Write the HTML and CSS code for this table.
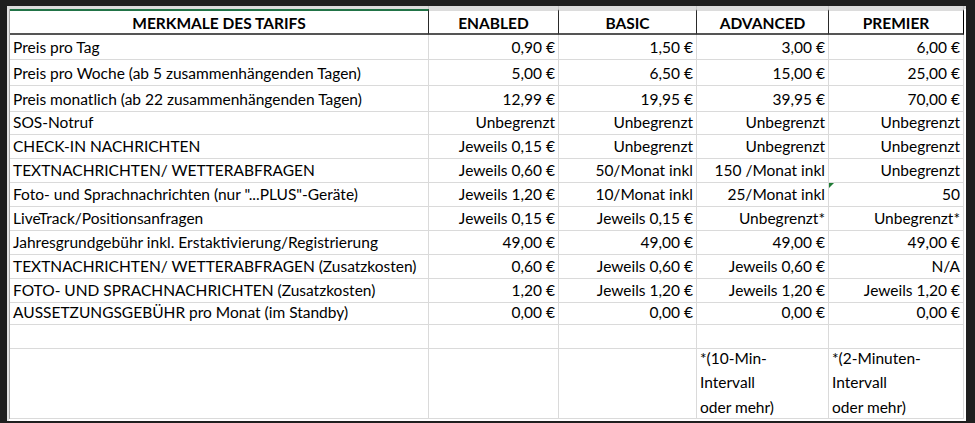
FILE: index.html
```html
<!DOCTYPE html>
<html lang="de">
<head>
<meta charset="utf-8">
<title>Merkmale des Tarifs</title>
<link rel="stylesheet" href="styles.css">
</head>
<body>
<div class="sheet">
  <div class="colbar">
    <span class="cb cb1"></span><span class="cb cb2"></span><span class="cb cb3"></span><span class="cb cb4"></span><span class="cb cb5"></span>
  </div>
  <div class="grid">
    <div class="rowbar"></div>
    <table class="tarif">
      <colgroup>
        <col class="w1"><col class="w2"><col class="w3"><col class="w4"><col class="w5">
      </colgroup>
      <thead>
        <tr class="head">
          <th class="sel">MERKMALE DES TARIFS</th>
          <th>ENABLED</th>
          <th>BASIC</th>
          <th>ADVANCED</th>
          <th class="last">PREMIER</th>
        </tr>
      </thead>
      <tbody>
        <tr class="h24"><td class="lbl">Preis pro Tag</td><td>0,90 €</td><td>1,50 €</td><td>3,00 €</td><td>6,00 €</td></tr>
        <tr class="h25"><td class="lbl">Preis pro Woche (ab 5 zusammenhängenden Tagen)</td><td>5,00 €</td><td>6,50 €</td><td>15,00 €</td><td>25,00 €</td></tr>
        <tr class="h25"><td class="lbl">Preis monatlich (ab 22 zusammenhängenden Tagen)</td><td>12,99 €</td><td>19,95 €</td><td>39,95 €</td><td>70,00 €</td></tr>
        <tr class="h22"><td class="lbl">SOS-Notruf</td><td>Unbegrenzt</td><td>Unbegrenzt</td><td>Unbegrenzt</td><td>Unbegrenzt</td></tr>
        <tr class="h23"><td class="lbl">CHECK-IN NACHRICHTEN</td><td>Jeweils 0,15 €</td><td>Unbegrenzt</td><td>Unbegrenzt</td><td>Unbegrenzt</td></tr>
        <tr class="h23"><td class="lbl">TEXTNACHRICHTEN/ WETTERABFRAGEN</td><td>Jeweils 0,60 €</td><td>50/Monat inkl</td><td>150 /Monat inkl</td><td>Unbegrenzt</td></tr>
        <tr class="h23"><td class="lbl">Foto- und Sprachnachrichten (nur "...PLUS"-Geräte)</td><td>Jeweils 1,20 €</td><td>10/Monat inkl</td><td>25/Monat inkl</td><td class="flag">50</td></tr>
        <tr class="h23"><td class="lbl">LiveTrack/Positionsanfragen</td><td>Jeweils 0,15 €</td><td>Jeweils 0,15 €</td><td>Unbegrenzt*</td><td>Unbegrenzt*</td></tr>
        <tr class="h23"><td class="lbl">Jahresgrundgebühr inkl. Erstaktivierung/Registrierung</td><td>49,00 €</td><td>49,00 €</td><td>49,00 €</td><td>49,00 €</td></tr>
        <tr class="h23"><td class="lbl">TEXTNACHRICHTEN/ WETTERABFRAGEN (Zusatzkosten)</td><td>0,60 €</td><td>Jeweils 0,60 €</td><td>Jeweils 0,60 €</td><td>N/A</td></tr>
        <tr class="h23"><td class="lbl">FOTO- UND SPRACHNACHRICHTEN (Zusatzkosten)</td><td>1,20 €</td><td>Jeweils 1,20 €</td><td>Jeweils 1,20 €</td><td>Jeweils 1,20 €</td></tr>
        <tr class="h21"><td class="lbl">AUSSETZUNGSGEBÜHR pro Monat (im Standby)</td><td>0,00 €</td><td>0,00 €</td><td>0,00 €</td><td>0,00 €</td></tr>
        <tr class="h23"><td></td><td></td><td></td><td></td><td></td></tr>
        <tr class="h69">
          <td></td><td></td><td></td>
          <td class="note"><div class="wrap"><p>*(10-Min-<br>Intervall<br>oder mehr)</p></div></td>
          <td class="note"><div class="wrap"><p>*(2-Minuten-<br>Intervall<br>oder mehr)</p></div></td>
        </tr>
      </tbody>
    </table>
  </div>
</div>
</body>
</html>
```

FILE: styles.css
```css
html, body {
  margin: 0;
  padding: 0;
  background: #1f1f1f;
}

body {
  width: 975px;
  height: 423px;
  overflow: hidden;
  font-family: Lato, "Liberation Sans", sans-serif;
  font-size: 15.5px;
  color: #000;
}

.sheet {
  margin: 6px 0 0 7px;
  width: 959px;
  height: 415px;
  background: #fff;
  display: flex;
  flex-direction: column;
}

.colbar {
  height: 3px;
  background: #dcdcdc;
  display: flex;
  padding-left: 3px;
}

.cb {
  display: block;
  height: 3px;
  box-sizing: border-box;
  border-right: 1px solid #c4c4c4;
}
.cb1 { width: 419px; }
.cb2 { width: 130px; }
.cb3 { width: 138px; }
.cb4 { width: 132px; }
.cb5 { width: 135px; }

.grid {
  display: flex;
  align-items: flex-start;
}

.rowbar {
  width: 2px;
  height: 412px;
  background: #e4e4e4;
}

.tarif {
  border-collapse: separate;
  border-spacing: 0;
  table-layout: fixed;
  width: 955px;
  border-left: 1px solid #a8a8a8;
}

.w1 { width: 419px; }
.w2 { width: 130px; }
.w3 { width: 138px; }
.w4 { width: 132px; }
.w5 { width: 135px; }

.tarif th,
.tarif td {
  box-sizing: border-box;
  padding: 0 3px 3px 3px;
  line-height: 18px;
  vertical-align: bottom;
  white-space: nowrap;
  overflow: visible;
}

.tarif td {
  text-align: right;
  border-right: 1px solid #dadada;
  border-bottom: 1px solid #dadada;
}

.tarif td.lbl {
  text-align: left;
}

.tarif th {
  height: 26px;
  font-weight: 700;
  text-align: center;
  padding-bottom: 1px;
  border-top: 2px solid #dcdcdc;
  border-bottom: 2px solid #555;
  border-right: 1px solid #2a2a2a;
}

.tarif th.sel {
  border-top-color: #217346;
}

.tarif th.last {
  border-right: 1px solid #000;
}

.h21 td { height: 22px; }
.h22 td { height: 23px; }
.h23 td { height: 24px; }
.h24 td { height: 25px; }
.h25 td { height: 26px; }
.h69 td { height: 70px; }

.tarif td.flag {
  position: relative;
}

.tarif td.flag::before {
  content: "";
  position: absolute;
  left: 0;
  top: 0;
  border-top: 5px solid #1e7b34;
  border-right: 5px solid transparent;
}

.tarif td.note {
  text-align: left;
  padding: 0 3px;
  vertical-align: bottom;
}

.wrap {
  height: 69px;
  display: flex;
  flex-direction: column;
  justify-content: flex-end;
}

.wrap p {
  margin: 0 0 -1px 0;
  line-height: 24.5px;
}
```
